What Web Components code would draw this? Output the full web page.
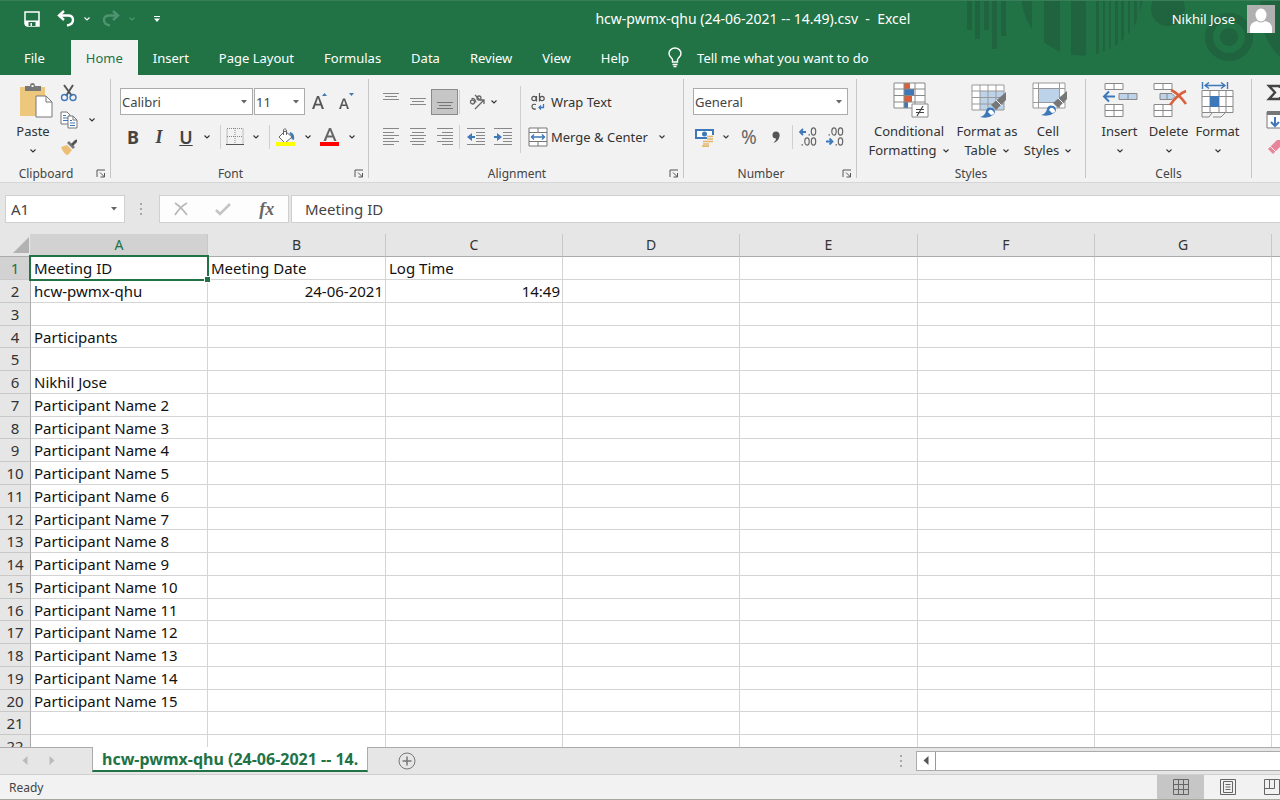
<!DOCTYPE html>
<html lang="en">
<head>
<meta charset="utf-8">
<meta name="viewport" content="width=device-width, initial-scale=1">
<title>hcw-pwmx-qhu (24-06-2021 -- 14.49).csv - Excel</title>
<style>
    body {
        margin: 0;
        font-family: "Noto Sans", "Open Sans", sans-serif;
        font-size: 13px;
        color: #333;
        background: #e6e6e6;
    }
</style>
</head>
<body>
<xl-app>
    <xl-header slot="top" user="Nikhil Jose">hcw-pwmx-qhu (24-06-2021 -- 14.49).csv  -  Excel</xl-header>
    <xl-ribbon slot="top"></xl-ribbon>
    <xl-formula-bar slot="top" cell="A1" value="Meeting ID"></xl-formula-bar>
    <xl-sheet></xl-sheet>
    <xl-sheet-tabs slot="bottom">hcw-pwmx-qhu (24-06-2021 -- 14.</xl-sheet-tabs>
    <xl-status-bar slot="bottom">Ready</xl-status-bar>
</xl-app>

<script>
// name: [width, height, svg content]
const ICONS = {
    chevron: [8, 6, '<path d="M1.5 1.5 4 4 6.500 1.500" fill="none" stroke="currentColor" stroke-width="1.1"/>'],
    triangle: [8, 6, '<path d="M1 1h6L4 4.500z" fill="#666"/>'],
    save: [16, 16, '<path d="M1 1h14v14H3l-2-2z" fill="none" stroke="#fff" stroke-width="1.500"/><path d="M1 9.500h14V15H1z" fill="#fff"/><path d="M4.500 11h7v4h-7z" fill="#217346"/><path d="M6.500 12h1.500v3H6.500z" fill="#fff"/>'],
    undo: [18, 17, '<path d="M7 1 2 5.500 7 10M2.500 5.500H11q5 0 5 4.500t-6 5.500" fill="none" stroke="currentColor" stroke-width="2.400"/>'],
    redo: [18, 17, '<path d="M11 1l5 4.500-5 4.500M15.500 5.500H7Q2 5.500 2 10t6 5.500" fill="none" stroke="currentColor" stroke-width="2.400"/>'],
    customize: [8, 8, '<path d="M1 1.500h6" stroke="#fff"/><path d="M1 3.500h6L4 7z" fill="#fff"/>'],
    bulb: [16, 21, '<path d="M5.500 15v-2.500C4.500 10.500 2 9.500 2 6.500a6 5.500 0 0 1 12 0c0 3-2.500 4-3.500 6V15zM5.500 17.500h5M6.500 19.500h3" fill="none" stroke="#fff" stroke-width="1.400"/>'],
    avatar: [28, 28, '<path d="M0 0h28v28H0z" fill="#b0b0b0"/><ellipse cx="14" cy="10" rx="5.500" ry="6.500" fill="#fff"/><path d="M3 28v-4q0-7 7-8 4 3 8 0 7 1 7 8v4z" fill="#fff"/>'],
    launcher: [10, 9, '<path d="M1 8V1h8M4 3.500l4.500 4.500M8.500 4v4H4.500" fill="none" stroke="#555" stroke-width="1"/>'],
    paste: [34, 36, '<path d="M1 5h25v29H1z" fill="#ecc77c"/><path d="M6 4h5q0-3 2.500-3T16 4h6v5H6z" fill="#777"/><path d="M12.500 3h2v2h-2z" fill="#f2f2f2"/><path d="M17 14h10l6 6v15H17z" fill="#fff" stroke="#777"/><path d="M27 14v6h6" fill="none" stroke="#777"/>'],
    cut: [18, 18, '<path d="M4 1l8 11M13 1 6 12" stroke="#555" stroke-width="2"/><circle cx="4.500" cy="13.500" r="3" fill="none" stroke="#3e78b8" stroke-width="1.400"/><circle cx="13" cy="13.500" r="3" fill="none" stroke="#3e78b8" stroke-width="1.400"/>'],
    copy: [18, 18, '<path d="M1 1h6l3 3v9H1z" fill="#fff" stroke="#777"/><path d="M3 4.500h3M3 7h5M3 9.500h5" stroke="#3e78b8"/><path d="M8 5h5l4 4v8H8z" fill="#fff" stroke="#777"/><path d="M13 5v4h4" fill="none" stroke="#777"/><path d="M10 9.500h2M10 12h5M10 14.500h5" stroke="#3e78b8"/>'],
    painter: [18, 18, '<path d="M1 9l6-2 5 5-4 5q-4 0-7-8z" fill="#ecbf75"/><path d="M7 5l6 6 2-2-6-6z" fill="#777"/><path d="M11 6l4-4q2-1 2 0t0 2l-4 4z" fill="#555"/>'],
    growFont: [18, 18, '<path d="M1 16 6 3h2l5 13h-2.200L9.600 12.500H4.400L3.200 16zM5 10.800h4L7 5z" fill="#555"/><path d="M11 3l2.500-3L16 3z" fill="#3e78b8"/>'],
    shrinkFont: [18, 18, '<path d="M1 16 5 5.500h2L11 16h-2L8.200 13H3.800L3 16zM4.400 11.500h3.200L6 7z" fill="#555"/><path d="M11 0h5l-2.500 3z" fill="#3e78b8"/>'],
    borders: [18, 18, '<path d="M1 .500h16v16H1zM9 0v16M1 8.500h16" fill="none" stroke="#888" stroke-dasharray="1 1"/><path d="M0 16.500h18" stroke="#555"/>'],
    fill: [20, 20, '<path d="M9 4l7 6-7 6-6-6z" fill="#fff" stroke="#666"/><path d="M7.500 8V3q1-3 3 0v5" fill="none" stroke="#666"/><path d="M14 5q5 1 4 8l-2.500-1q1-3-2-5z" fill="#3e78b8"/><path d="M0 15h19v4H0z" fill="#ff0"/>'],
    fontColor: [20, 20, '<path d="M3.500 14 9 1h2l5.500 13h-2.400L12.800 10.500H7.200L6 14zM8 8.600h4L10 3.500z" fill="#666"/><path d="M0 15h19v4H0z" fill="#f00"/>'],
    alignTop: [18, 18, '<path d="M1 .500h16M3 3.500h12M1 6.500h16" stroke="#888"/>'],
    alignMiddle: [18, 18, '<path d="M1 5.500h16M3 8.500h12M1 11.500h16" stroke="#888"/>'],
    alignBottom: [18, 18, '<path d="M1 9.500h16M3 12.500h12M1 15.500h16" stroke="#777"/>'],
    alignLeft: [18, 18, '<path d="M1 .500h16M1 4.500h11M1 7.500h16M1 10.500h11M1 13.500h16M1 16.500h11" stroke="#888"/>'],
    alignCenter: [18, 18, '<path d="M1 .500h16M3 4.500h12M1 7.500h16M3 10.500h12M1 13.500h16M3 16.500h12" stroke="#888"/>'],
    alignRight: [18, 18, '<path d="M1 .500h16M6 4.500h11M1 7.500h16M6 10.500h11M1 13.500h16M6 16.500h11" stroke="#888"/>'],
    orient: [18, 18, '<g fill="none" stroke="#666" stroke-width="1.300"><circle cx="4.500" cy="9" r="2"/><path d="M3.500 6q2-1.500 3.500 1l1 2.500M7 2l5 5"/><circle cx="11" cy="5" r="2"/><path d="M7 16 16 7M12 7h4v4"/></g>'],
    outdent: [18, 18, '<path d="M0 .500h18M9 4.500h9M9 7.500h9M9 10.500h9M9 13.500h9M0 16.500h18" stroke="#888"/><path d="M0 9l5-4v3h3v2H5v3z" fill="#3e78b8"/>'],
    indent: [18, 18, '<path d="M0 .500h18M9 4.500h9M9 7.500h9M9 10.500h9M9 13.500h9M0 16.500h18" stroke="#888"/><path d="M8 9 3 5v3H0v2h3v3z" fill="#3e78b8"/>'],
    wrap: [20, 18, '<g fill="none" stroke="#555" stroke-width="1.200"><circle cx="6" cy="5.500" r="2.200"/><path d="M8.500 3v5.500M11.500 0v8.500"/><circle cx="14" cy="5.500" r="2.200"/><path d="M8 11.500q-4-1-4 2t4 2.500"/></g><path d="M15.500 11v3.500h-4M13 12.500l-2 2 2 2" fill="none" stroke="#3e78b8" stroke-width="1.300"/>'],
    merge: [20, 20, '<path d="M1 1h18v18H1zM1 5.500h18M1 14.500h18M10 1v4.500M10 14.500V19" fill="#fff" stroke="#777"/><path d="M3 10h14M6 7.500 3.500 10 6 12.500M14 7.500l2.500 2.500-2.500 2.500" fill="none" stroke="#3e78b8" stroke-width="1.300"/>'],
    money: [20, 19, '<path d="M0 1h19v10H0z" fill="#3e78b8"/><path d="M2 3h15v6H2z" fill="#fff"/><circle cx="9.500" cy="6" r="2.500" fill="#3e78b8"/><path d="M12 7h7v8h-4v3H7v-6h5z" fill="#f2f2f2"/><path d="M12 8.500h6M12 11h6M12 13.500h6M8 13.500h6M8 16h6M7 18.200h7" stroke="#e4b86c" stroke-width="1.700"/>'],
    comma: [8, 12, '<circle cx="4" cy="4" r="3.500" fill="#555"/><path d="M7.500 4q0 6-6 8 3-3 3-6z" fill="#555"/>'],
    incDec: [18, 20, '<path d="M1 5h6M4 2 1 5l3 3" fill="none" stroke="#3e78b8" stroke-width="1.800"/><g fill="none" stroke="#666" stroke-width="1.200"><ellipse cx="14.500" cy="4.500" rx="2.200" ry="3.600"/><ellipse cx="8" cy="14.500" rx="2.200" ry="3.600"/><ellipse cx="14.500" cy="14.500" rx="2.200" ry="3.600"/></g><path d="M9.500 7.800h1.500M2.500 17.800H4" stroke="#666" stroke-width="1.300"/>'],
    decDec: [18, 20, '<path d="M0 14.500h6.500M3.500 11.500l3 3-3 3" fill="none" stroke="#3e78b8" stroke-width="1.800"/><g fill="none" stroke="#666" stroke-width="1.200"><ellipse cx="14.500" cy="4.500" rx="2.200" ry="3.600"/><ellipse cx="8" cy="4.500" rx="2.200" ry="3.600"/><ellipse cx="14.500" cy="14.500" rx="2.200" ry="3.600"/></g><path d="M2.500 7.800H4M9.500 17.800h1.500" stroke="#666" stroke-width="1.300"/>'],
    conditional: [36, 36, '<path d="M1 1h31v25H1z" fill="#fff"/><path d="M11 1h6v6h-6zM11 14h8v6h-8z" fill="#d9603b"/><path d="M11 7h10v7H11zM11 20h4v6h-4z" fill="#3e78b8"/><path d="M1 1h31v25H1zM11 1v25M22 1v25M1 7h31M1 13.500h31M1 20h31" fill="none" stroke="#888"/><path d="M19 22h16v13H19z" fill="#fff" stroke="#888"/><path d="M23 27.500h8M23 30.500h8M30 24l-6 10" stroke="#444" stroke-width="1.200"/>'],
    formatTable: [36, 36, '<path d="M1 3h32v25H1z" fill="#fff"/><path d="M9 9h24v19H9z" fill="#bdd3ea"/><path d="M1 3h32v25H1zM9 3v25M17 3v25M25 3v25M1 9h32M1 15.500h32M1 22h32" fill="none" stroke="#999"/><path d="M35 10v8L25 28l-5-5z" fill="#777"/><path d="M25 18l6 6" stroke="#f2f2f2"/><path d="M9 35q5-1 6-6t7-3q4 4 0 7-5 4-13 2z" fill="#3e78b8"/><path d="M17 30q2-4 5-1t-2 4z" fill="#fff"/>'],
    cellStyles: [36, 36, '<path d="M1 1h32v25H1z" fill="#fff"/><path d="M7 7h20v13H7z" fill="#bdd3ea"/><path d="M1 1h32v25H1zM6.500 1v25M27.500 1v25M1 6.500h32M1 20.500h32" fill="none" stroke="#999"/><path d="M35 9v8L26 26l-5-5z" fill="#777"/><path d="M26 16l6 6" stroke="#f2f2f2"/><path d="M9 33q5-1 6-6t7-3q4 4 0 7-5 4-13 2z" fill="#3e78b8"/><path d="M17 28q2-4 5-1t-2 4z" fill="#fff"/>'],
    insertCells: [36, 36, '<g fill="#fff" stroke="#888"><path d="M3 1.500h18v6H3zM12 1.500v6M3 22.500h18v12H3zM12 22.500v12M3 28.500h18"/><path d="M17 11.500h18v6H17zM26 11.500v6" fill="#bdd3ea"/></g><path d="M13 14.500H2M7 9.500l-5 5 5 5" fill="none" stroke="#3e78b8" stroke-width="2"/>'],
    deleteCells: [36, 36, '<g fill="#fff" stroke="#888"><path d="M3 1.500h18v6H3zM12 1.500v6M3 22.500h18v12H3zM12 22.500v12M3 28.500h18"/><path d="M9 11.500h12l3 3-3 3H9zM16 11.500v6" fill="#bdd3ea"/></g><path d="M20 8q7 3 15 14M35 9q-8 3-16 14" fill="none" stroke="#d9603b" stroke-width="2.500"/>'],
    formatCells: [36, 36, '<path d="M2 8.500h31v22H2z" fill="#fff"/><path d="M2 8.500h31v22H2zM10 8.500v22M19 8.500v22M26 8.500v22M2 14.500h31M2 24.500h31M2 31v4h7l3-4M13 35h8l4-4" fill="none" stroke="#888"/><path d="M10 14h9v11h-9z" fill="#3e78b8"/><path d="M2.500 0v7M27.500 0v7M5 3.500h20M9 .500l-4 3 4 3M21 .500l4 3-4 3" fill="none" stroke="#3e78b8" stroke-width="1.400"/>'],
    sum: [16, 18, '<path d="M14 4V2H3l6 6.500L3 15h11v-2" fill="none" stroke="#444" stroke-width="2.400"/>'],
    fillDown: [18, 18, '<path d="M1 1h16v16H1z" fill="#fff" stroke="#777"/><path d="M1 0h16v4H1z" fill="#777"/><path d="M9 6v9M5 11l4 4 4-4" fill="none" stroke="#3e78b8" stroke-width="2"/>'],
    eraser: [18, 18, '<path d="M2 11 11 2h5v5l-9 9z" fill="#e8859a"/><path d="M4 8l6 6" stroke="#f2f2f2"/>'],
    dots: [4, 14, '<path d="M1 1h2v2H1zM1 6h2v2H1zM1 11h2v2H1z" fill="#a8a8a8"/>'],
    cancel: [14, 14, '<path d="M1 1q6 4 12 12M13 1Q6 5 1 13" fill="none" stroke="#b8b8b8" stroke-width="1.700"/>'],
    accept: [16, 14, '<path d="M1 8l4 4L15 2" fill="none" stroke="#c4c4c4" stroke-width="2.600"/>'],
    corner: [18, 18, '<path d="M17 1v16H1z" fill="#b2b2b2"/>'],
    left: [6, 10, '<path d="M5.500 0v9L.500 4.500z" fill="currentColor"/>'],
    right: [6, 10, '<path d="M.500 0v9l5-4.500z" fill="currentColor"/>'],
    add: [18, 18, '<g fill="none" stroke="#777"><circle cx="9" cy="9" r="8"/><path d="M9 4.500v9M4.500 9h9" stroke-width="1.500"/></g>'],
    viewNormal: [16, 16, '<path d="M.500.500h15v15H.500zM5.500.500v15M10.500.500v15M.500 5.500h15M.500 10.500h15" fill="none" stroke="#666"/>'],
    viewPage: [16, 16, '<path d="M.500.500h15v15H.500zM3.500 2.500h9v11h-9zM5.500 5.500h5M5.500 8h5M5.500 10.500h5" fill="none" stroke="#666"/>'],
    viewBreak: [16, 16, '<path d="M.500.500h15v15H.500zM.500 9.500h10v-9M5.500.500v9" fill="none" stroke="#666"/>']
};

const BUTTON_CSS = `
    button {
        font: inherit;
        color: inherit;
        background: none;
        border: 0;
        padding: 0;
        margin: 0;
        display: flex;
        align-items: center;
        justify-content: center;
    }
`;

function define(name, html, setup) {
    const template = document.createElement('template');
    template.innerHTML = html;
    customElements.define(name, class extends HTMLElement {
        constructor() {
            super();
            this.attachShadow({ mode: 'open' });
            this.shadowRoot.appendChild(template.content.cloneNode(true));
        }
        connectedCallback() {
            if (setup) setup.call(this, this.shadowRoot);
        }
    });
}

define('xl-icon', `
<style>
    :host { display: inline-block; flex: none; line-height: 0; }
    svg { display: block; }
</style>
<svg aria-hidden="true"></svg>
`, function (root) {
    const [w, h, content] = ICONS[this.getAttribute('name')];
    const svg = root.querySelector('svg');
    svg.setAttribute('width', w);
    svg.setAttribute('height', h);
    svg.setAttribute('viewBox', `0 0 ${w} ${h}`);
    svg.innerHTML = content;
});

define('xl-app', `
<style>
    :host { display: flex; flex-direction: column; height: 100vh; overflow: hidden; }
    main { flex: 1; min-height: 0; overflow: hidden; }
</style>
<slot name="top"></slot>
<main><slot></slot></main>
<slot name="bottom"></slot>
`);

define('xl-header', `
<style>
    ${BUTTON_CSS}
    :host { display: block; position: relative; background: #217346; color: #fff; overflow: hidden; }
    .decor { position: absolute; top: 0; right: 0; }
    .title {
        position: relative;
        display: grid;
        grid-template-columns: 334px 1fr auto;
        align-items: center;
        height: 36px;
        border-top: 1px solid #387f59;
        box-sizing: border-box;
    }
    .quick { display: flex; align-items: center; padding-left: 24px; }
    .quick button { height: 24px; }
    .arrow { width: 24px; }
    .undo { width: 18px; margin-left: 17px; }
    .redo, .off { color: #4f9470; }
    .redo { width: 18px; margin-left: 3px; }
    .custom { margin-left: 9px; }
    h1 { margin: 0; font-size: 14px; font-weight: 400; white-space: pre; text-align: center; }
    .user { gap: 12px; padding-right: 5px; }
    .tabs { position: relative; display: flex; align-items: stretch; height: 39px; padding-top: 4px; box-sizing: border-box; line-height: 34px; }
    .tabs button { padding: 0 15px; }
    .tabs .file { padding: 0 26px 0 24px; }
    .tabs .on { background: #f2f2f2; color: #217346; }
    .tabs .tell { gap: 14px; padding-left: 23px; }
</style>
<svg class="decor" width="340" height="75" viewBox="0 0 340 75" fill="#20633f" aria-hidden="true">
    <clipPath id="disc"><circle cx="142" cy="-5" r="60.500"/></clipPath>
    <path d="M27 0h5v30h-5zM35 0h5v39h-5zM44 0h5v30h-5zM52 0h5v49h-5zM61 0h5v36h-5z"/>
    <path clip-path="url(#disc)" d="M80 0h12v60H80zM104 0h16v60h-16zM131 0h15v60h-15zM156 0h3v60h-3zM163 0h2v60h-2zM169 0h2v60h-2zM175 0h3v60h-3zM181 0h3v60h-3zM188 0h2v60h-2zM194 0h3v60h-3zM200 0h3v60h-3z"/>
    <circle cx="228" cy="9" r="17"/>
    <circle cx="289" cy="37" r="20" fill="none" stroke="#20633f" stroke-width="8"/>
    <circle cx="289" cy="37" r="9"/>
    <circle cx="385" cy="10" r="65"/>
</svg>
<div class="title">
    <div class="quick">
        <button aria-label="Save"><xl-icon name="save"></xl-icon></button>
        <button class="undo" aria-label="Undo"><xl-icon name="undo"></xl-icon></button>
        <button class="arrow" aria-label="Undo list"><xl-icon name="chevron"></xl-icon></button>
        <button class="redo" aria-label="Redo"><xl-icon name="redo"></xl-icon></button>
        <button class="arrow off" aria-label="Redo list"><xl-icon name="chevron"></xl-icon></button>
        <button class="custom" aria-label="Customize toolbar"><xl-icon name="customize"></xl-icon></button>
    </div>
    <h1><slot></slot></h1>
    <button class="user"><span></span><xl-icon name="avatar"></xl-icon></button>
</div>
<div class="tabs">
    <button class="file">File</button>
    <button class="on">Home</button>
    <button>Insert</button>
    <button>Page Layout</button>
    <button>Formulas</button>
    <button>Data</button>
    <button>Review</button>
    <button>View</button>
    <button>Help</button>
    <button class="tell"><xl-icon name="bulb"></xl-icon>Tell me what you want to do</button>
</div>
`, function (root) {
    root.querySelector('.user span').textContent = this.getAttribute('user');
});

define('xl-group', `
<style>
    ${BUTTON_CSS}
    :host {
        display: flex;
        flex-direction: column;
        flex: none;
        box-sizing: border-box;
        border-right: 1px solid #c8c6c4;
    }
    .body { flex: 1; min-height: 0; }
    .foot { display: flex; flex: none; align-items: center; height: 10px; font-size: 12px; color: #444; }
    .foot span { flex: 1; text-align: center; }
    .foot button { width: 18px; height: 10px; }
    :host(:not([launcher])) .foot button { display: none; }
</style>
<div class="body"><slot></slot></div>
<div class="foot"><span></span><button><xl-icon name="launcher"></xl-icon></button></div>
`, function (root) {
    const label = this.getAttribute('label') || '';
    root.querySelector('span').textContent = label;
    root.querySelector('button').setAttribute('aria-label', label + ' settings');
});

// Drop-down box: options come in as a comma separated list
define('xl-select', `
<style>
    :host { display: grid; align-items: center; height: 27px; box-sizing: border-box; border: 1px solid #ababab; background: #fff; }
    select {
        grid-area: 1 / 1;
        appearance: none;
        width: 100%;
        height: 100%;
        border: 0;
        padding: 0 1px;
        background: none;
        font: inherit;
        color: #444;
    }
    xl-icon { grid-area: 1 / 1; justify-self: end; margin-right: 4px; pointer-events: none; }
</style>
<select></select><xl-icon name="triangle"></xl-icon>
`, function (root) {
    const select = root.querySelector('select');
    select.setAttribute('aria-label', this.getAttribute('label'));
    this.getAttribute('options').split(',').forEach(text => select.add(new Option(text)));
});

define('xl-ribbon', `
<style>
    ${BUTTON_CSS}
    :host {
        display: flex;
        height: 108px;
        padding: 4px 0;
        box-sizing: border-box;
        overflow: hidden;
        background: #f2f2f2;
        border-bottom: 1px solid #d6d6d6;
    }
    .clipboard { width: 111px; }
    .font { width: 258px; }
    .alignment { width: 315px; }
    .number { width: 173px; }
    .styles { width: 229px; }
    .cells { width: 166px; }
    .editing { border: 0; width: 160px; }
    .row { display: grid; align-items: center; height: 26px; }
    .row > button { height: 26px; }
    .row.first { height: 45px; }
    i.sep { width: 1px; height: 24px; background: #d2d0ce; justify-self: center; }
    .columns { display: flex; }
    .small { display: flex; flex-direction: column; }
    .small button { height: 27px; }
    .big { display: flex; flex-direction: column; justify-content: flex-start; line-height: 19px; padding-top: 3px; }
    .big xl-icon { margin-bottom: 4px; }
    .big .drop { height: 19px; margin: 0; display: flex; align-items: center; }
    .big .line { display: flex; align-items: center; gap: 5px; }
    .big .line xl-icon { margin: 0; }
    .styles .big > xl-icon { padding-left: 4px; }
    .clipboard .paste { padding-left: 5px; }
    .clipboard .columns { padding-left: 16px; }
    .clipboard .big { width: 34px; }
    .clipboard .small { width: 38px; }
    .clipboard .copy { align-self: center; }
    .font .row, .number .row { padding-left: 9px; }
    .glyph { font-size: 18px; color: #444; }
    .bold { font-weight: 700; }
    .italic { font-family: "Liberation Serif", serif; font-style: italic; font-weight: 700; }
    .under { text-decoration: underline; font-weight: 600; }
    .percent { font-size: 19px; color: #666; }
    .on { background: #c6c6c6; box-shadow: inset 0 0 0 1px #8a8a8a; }
    .alignment .columns > i.sep { height: 67px; margin-top: 7px; }
    .alignment .left { width: 151px; }
    .alignment .left .row { padding-left: 8px; }
    .alignment .right { padding-left: 7px; }
    .alignment .right button { justify-content: flex-start; gap: 3px; }
</style>
<xl-group class="clipboard" label="Clipboard" launcher>
    <div class="columns">
        <button class="big"><xl-icon class="paste" name="paste"></xl-icon>Paste<xl-icon class="drop" name="chevron"></xl-icon></button>
        <div class="small">
            <button aria-label="Cut"><xl-icon name="cut"></xl-icon></button>
            <button aria-label="Copy"><xl-icon name="copy"></xl-icon></button>
            <button aria-label="Format Painter"><xl-icon name="painter"></xl-icon></button>
        </div>
        <button class="copy" aria-label="Copy options"><xl-icon name="chevron"></xl-icon></button>
    </div>
</xl-group>
<xl-group class="font" label="Font" launcher>
    <div class="row first" style="grid-template-columns: 133px 51px 27px 26px; column-gap: 1px">
        <xl-select label="Font" options="Calibri"></xl-select>
        <xl-select label="Font size" options="11"></xl-select>
        <button aria-label="Increase font size"><xl-icon name="growFont"></xl-icon></button>
        <button aria-label="Decrease font size"><xl-icon name="shrinkFont"></xl-icon></button>
    </div>
    <div class="row" style="grid-template-columns: 26px 26px 28px 14px 12px 18px 24px 2px 32px 12px 32px 12px">
        <button class="glyph bold">B</button>
        <button class="glyph italic">I</button>
        <button class="glyph under">U</button>
        <button aria-label="Underline options"><xl-icon name="chevron"></xl-icon></button>
        <i class="sep"></i>
        <button aria-label="Borders"><xl-icon name="borders"></xl-icon></button>
        <button aria-label="Border options"><xl-icon name="chevron"></xl-icon></button>
        <i class="sep"></i>
        <button aria-label="Fill color"><xl-icon name="fill"></xl-icon></button>
        <button aria-label="Fill options"><xl-icon name="chevron"></xl-icon></button>
        <button aria-label="Font color"><xl-icon name="fontColor"></xl-icon></button>
        <button aria-label="Font color options"><xl-icon name="chevron"></xl-icon></button>
    </div>
</xl-group>
<xl-group class="alignment" label="Alignment" launcher>
    <div class="columns">
        <div class="left">
            <div class="row first" style="grid-template-columns: 27px 27px 27px 3px 32px 2px">
                <button aria-label="Top align"><xl-icon name="alignTop"></xl-icon></button>
                <button aria-label="Middle align"><xl-icon name="alignMiddle"></xl-icon></button>
                <button class="on" aria-label="Bottom align"><xl-icon name="alignBottom"></xl-icon></button>
                <i class="sep"></i>
                <button aria-label="Orientation"><xl-icon name="orient"></xl-icon></button>
                <button aria-label="Orientation options"><xl-icon name="chevron"></xl-icon></button>
            </div>
            <div class="row" style="grid-template-columns: 27px 27px 27px 3px 30px 24px">
                <button aria-label="Align left"><xl-icon name="alignLeft"></xl-icon></button>
                <button aria-label="Center"><xl-icon name="alignCenter"></xl-icon></button>
                <button aria-label="Align right"><xl-icon name="alignRight"></xl-icon></button>
                <i class="sep"></i>
                <button aria-label="Decrease indent"><xl-icon name="outdent"></xl-icon></button>
                <button aria-label="Increase indent"><xl-icon name="indent"></xl-icon></button>
            </div>
        </div>
        <i class="sep"></i>
        <div class="right">
            <div class="row first"><button><xl-icon name="wrap"></xl-icon>Wrap Text</button></div>
            <div class="row" style="grid-template-columns: 130px 14px">
                <button><xl-icon name="merge"></xl-icon>Merge &amp; Center</button>
                <button aria-label="Merge options"><xl-icon name="chevron"></xl-icon></button>
            </div>
        </div>
    </div>
</xl-group>
<xl-group class="number" label="Number" launcher>
    <div class="row first" style="grid-template-columns: 155px">
        <xl-select label="Number format" options="General"></xl-select>
    </div>
    <div class="row" style="grid-template-columns: 24px 18px 28px 26px 6px 26px 28px">
        <button aria-label="Accounting format"><xl-icon name="money"></xl-icon></button>
        <button aria-label="Accounting options"><xl-icon name="chevron"></xl-icon></button>
        <button class="percent">%</button>
        <button aria-label="Comma style"><xl-icon name="comma"></xl-icon></button>
        <i class="sep"></i>
        <button aria-label="Increase decimal"><xl-icon name="incDec"></xl-icon></button>
        <button aria-label="Decrease decimal"><xl-icon name="decDec"></xl-icon></button>
    </div>
</xl-group>
<xl-group class="styles" label="Styles">
    <div class="columns" style="padding-left: 9px">
        <button class="big" style="width: 86px"><xl-icon name="conditional"></xl-icon>Conditional<span class="line">Formatting <xl-icon name="chevron"></xl-icon></span></button>
        <button class="big" style="width: 70px"><xl-icon name="formatTable"></xl-icon>Format as<span class="line">Table <xl-icon name="chevron"></xl-icon></span></button>
        <button class="big" style="width: 52px"><xl-icon name="cellStyles"></xl-icon>Cell<span class="line">Styles <xl-icon name="chevron"></xl-icon></span></button>
    </div>
</xl-group>
<xl-group class="cells" label="Cells">
    <div class="columns" style="padding-left: 9px">
        <button class="big" style="width: 49px"><xl-icon name="insertCells"></xl-icon>Insert<xl-icon class="drop" name="chevron"></xl-icon></button>
        <button class="big" style="width: 49px"><xl-icon name="deleteCells"></xl-icon>Delete<xl-icon class="drop" name="chevron"></xl-icon></button>
        <button class="big" style="width: 49px"><xl-icon name="formatCells"></xl-icon>Format<xl-icon class="drop" name="chevron"></xl-icon></button>
    </div>
</xl-group>
<xl-group class="editing">
    <div class="small" style="align-items: flex-start; padding-left: 14px">
        <button aria-label="AutoSum"><xl-icon name="sum"></xl-icon></button>
        <button aria-label="Fill"><xl-icon name="fillDown"></xl-icon></button>
        <button aria-label="Clear"><xl-icon name="eraser"></xl-icon></button>
    </div>
</xl-group>
`);

define('xl-formula-bar', `
<style>
    ${BUTTON_CSS}
    :host { display: flex; height: 51px; padding: 12px 0 11px; box-sizing: border-box; background: #e6e6e6; }
    .name, .buttons, .value { display: flex; align-items: center; background: #fff; border: 1px solid #d0d0d0; box-sizing: border-box; }
    .name { width: 120px; margin-left: 5px; }
    input { flex: 1; min-width: 0; border: 0; background: none; font: inherit; font-size: 15px; color: #444; padding: 0 5px; }
    .name button { width: 20px; }
    .dots { align-self: center; padding: 0 16px 0 14px; }
    .buttons { width: 130px; margin-right: 2px; justify-content: space-around; background: #fdfdfd; }
    .fx { font-family: "Liberation Serif", serif; font-style: italic; font-weight: 700; font-size: 18px; color: #666; }
    .value { flex: 1; border-right: 0; }
    .value input { padding-left: 13px; }
</style>
<div class="name"><input class="cell" aria-label="Name box"><button aria-label="Names"><xl-icon name="triangle"></xl-icon></button></div>
<xl-icon class="dots" name="dots"></xl-icon>
<div class="buttons">
    <button aria-label="Cancel"><xl-icon name="cancel"></xl-icon></button>
    <button aria-label="Enter"><xl-icon name="accept"></xl-icon></button>
    <button class="fx">fx</button>
</div>
<div class="value"><input class="text" aria-label="Formula"></div>
`, function (root) {
    root.querySelector('.cell').value = this.getAttribute('cell');
    root.querySelector('.text').value = this.getAttribute('value');
});

define('xl-sheet', `
<style>
    :host { display: block; background: #fff; }
    table { border-collapse: separate; border-spacing: 0; table-layout: fixed; width: 0; font-size: 15px; line-height: 20px; }
    th, td { box-sizing: border-box; padding: 0; border-right: 1px solid #d4d4d4; border-bottom: 1px solid #d4d4d4; white-space: nowrap; }
    th { background: #e6e6e6; color: #333; font-weight: 400; }
    thead th { border-right-color: #c8c8c8; border-bottom-color: #ababab; font-size: 14px; }
    tbody th { border-right-color: #ababab; border-bottom-color: #c8c8c8; }
    tr { height: 23px; }
    tbody tr:nth-child(4n) { height: 22px; }
    th.on { background: #d2d2d2; color: #217346; }
    td { color: #111; padding: 0 2px 0 3px; background: #fff; }
    td.number { text-align: right; }
    th.all { border-right-color: #d4d4d4; }
    .all xl-icon { display: block; width: 18px; margin-left: auto; }
    td.active { position: relative; }
    td.active::before { content: ""; position: absolute; inset: -2px; border: 2px solid #217346; }
    td.active::after { content: ""; position: absolute; right: -3px; bottom: -3px; width: 5px; height: 5px; background: #217346; box-shadow: 0 0 0 1px #fff; }
</style>
<table>
    <colgroup></colgroup>
    <thead><tr><th class="all"><xl-icon name="corner"></xl-icon></th></tr></thead>
    <tbody></tbody>
</table>
`, function (root) {
    const columns = 'ABCDEFG'.split('');
    const data = { A1: 'Meeting ID', B1: 'Meeting Date', C1: 'Log Time', A2: 'hcw-pwmx-qhu', B2: '24-06-2021', C2: '14:49', A4: 'Participants', A6: 'Nikhil Jose' };
    for (let i = 2; i <= 15; i++) data['A' + (i + 5)] = 'Participant Name ' + i;
    // spare column that runs on past the window's edge
    columns.push('');

    const group = root.querySelector('colgroup');
    const head = root.querySelector('thead tr');
    const body = root.querySelector('tbody');
    group.innerHTML = '<col style="width: 31px">';
    columns.forEach((name, i) => {
        group.innerHTML += `<col style="width: ${i % 3 === 1 ? 178 : 177}px">`;
        head.innerHTML += `<th scope="col" class="${name === 'A' ? 'on' : ''}">${name}</th>`;
    });
    for (let r = 1; r <= 22; r++) {
        const tr = document.createElement('tr');
        tr.innerHTML = `<th scope="row" class="${r === 1 ? 'on' : ''}">${r}</th>`;
        columns.forEach(name => {
            const td = tr.insertCell();
            const text = data[name + r] || '';
            td.textContent = text;
            if (/^\d/.test(text)) td.className = 'number';
            if (name + r === 'A1') td.className = 'active';
        });
        body.appendChild(tr);
    }
});

define('xl-sheet-tabs', `
<style>
    ${BUTTON_CSS}
    :host { display: flex; align-items: center; height: 27px; box-sizing: border-box; background: #e6e6e6; border-top: 1px solid #ababab; }
    .nav { display: flex; width: 92px; box-sizing: border-box; padding-left: 13px; gap: 3px; color: #bbb; }
    .nav button { width: 24px; }
    .tab {
        align-self: flex-start;
        height: 25px;
        box-sizing: border-box;
        padding: 0 9px;
        margin-top: -1px;
        background: #fff;
        border: 1px solid #ababab;
        border-width: 0 1px;
        border-bottom: 2px solid #217346;
        color: #217346;
        font-weight: 700;
        font-size: 16px;
        white-space: nowrap;
    }
    .add { margin-left: 30px; }
    .dots { margin-left: auto; padding-right: 13px; }
    .scroll { display: flex; width: 364px; height: 20px; box-sizing: border-box; background: #fff; border: 1px solid #ababab; border-right: 0; }
    .scroll button { width: 19px; border-right: 1px solid #999; color: #555; }
</style>
<div class="nav">
    <button aria-label="Previous sheet"><xl-icon name="left"></xl-icon></button>
    <button aria-label="Next sheet"><xl-icon name="right"></xl-icon></button>
</div>
<button class="tab"><slot></slot></button>
<button class="add" aria-label="New sheet"><xl-icon name="add"></xl-icon></button>
<xl-icon class="dots" name="dots"></xl-icon>
<div class="scroll"><button aria-label="Scroll left"><xl-icon name="left"></xl-icon></button></div>
`);

define('xl-status-bar', `
<style>
    ${BUTTON_CSS}
    :host {
        display: flex;
        align-items: stretch;
        height: 26px;
        box-sizing: border-box;
        background: #f2f2f2;
        border-top: 1px solid #cfcfcf;
        border-bottom: 1px solid #a8a8a0;
        font-size: 12px;
        color: #444;
    }
    .state { flex: 1; align-self: center; padding-left: 9px; }
    button { width: 47px; }
    .on { background: #c6c6c6; }
    .last { width: 29px; justify-content: flex-end; overflow: hidden; }
</style>
<span class="state"><slot></slot></span>
<button class="on" aria-label="Normal"><xl-icon name="viewNormal"></xl-icon></button>
<button aria-label="Page layout"><xl-icon name="viewPage"></xl-icon></button>
<button class="last" aria-label="Page break preview"><xl-icon name="viewBreak"></xl-icon></button>
`);
</script>
</body>
</html>
